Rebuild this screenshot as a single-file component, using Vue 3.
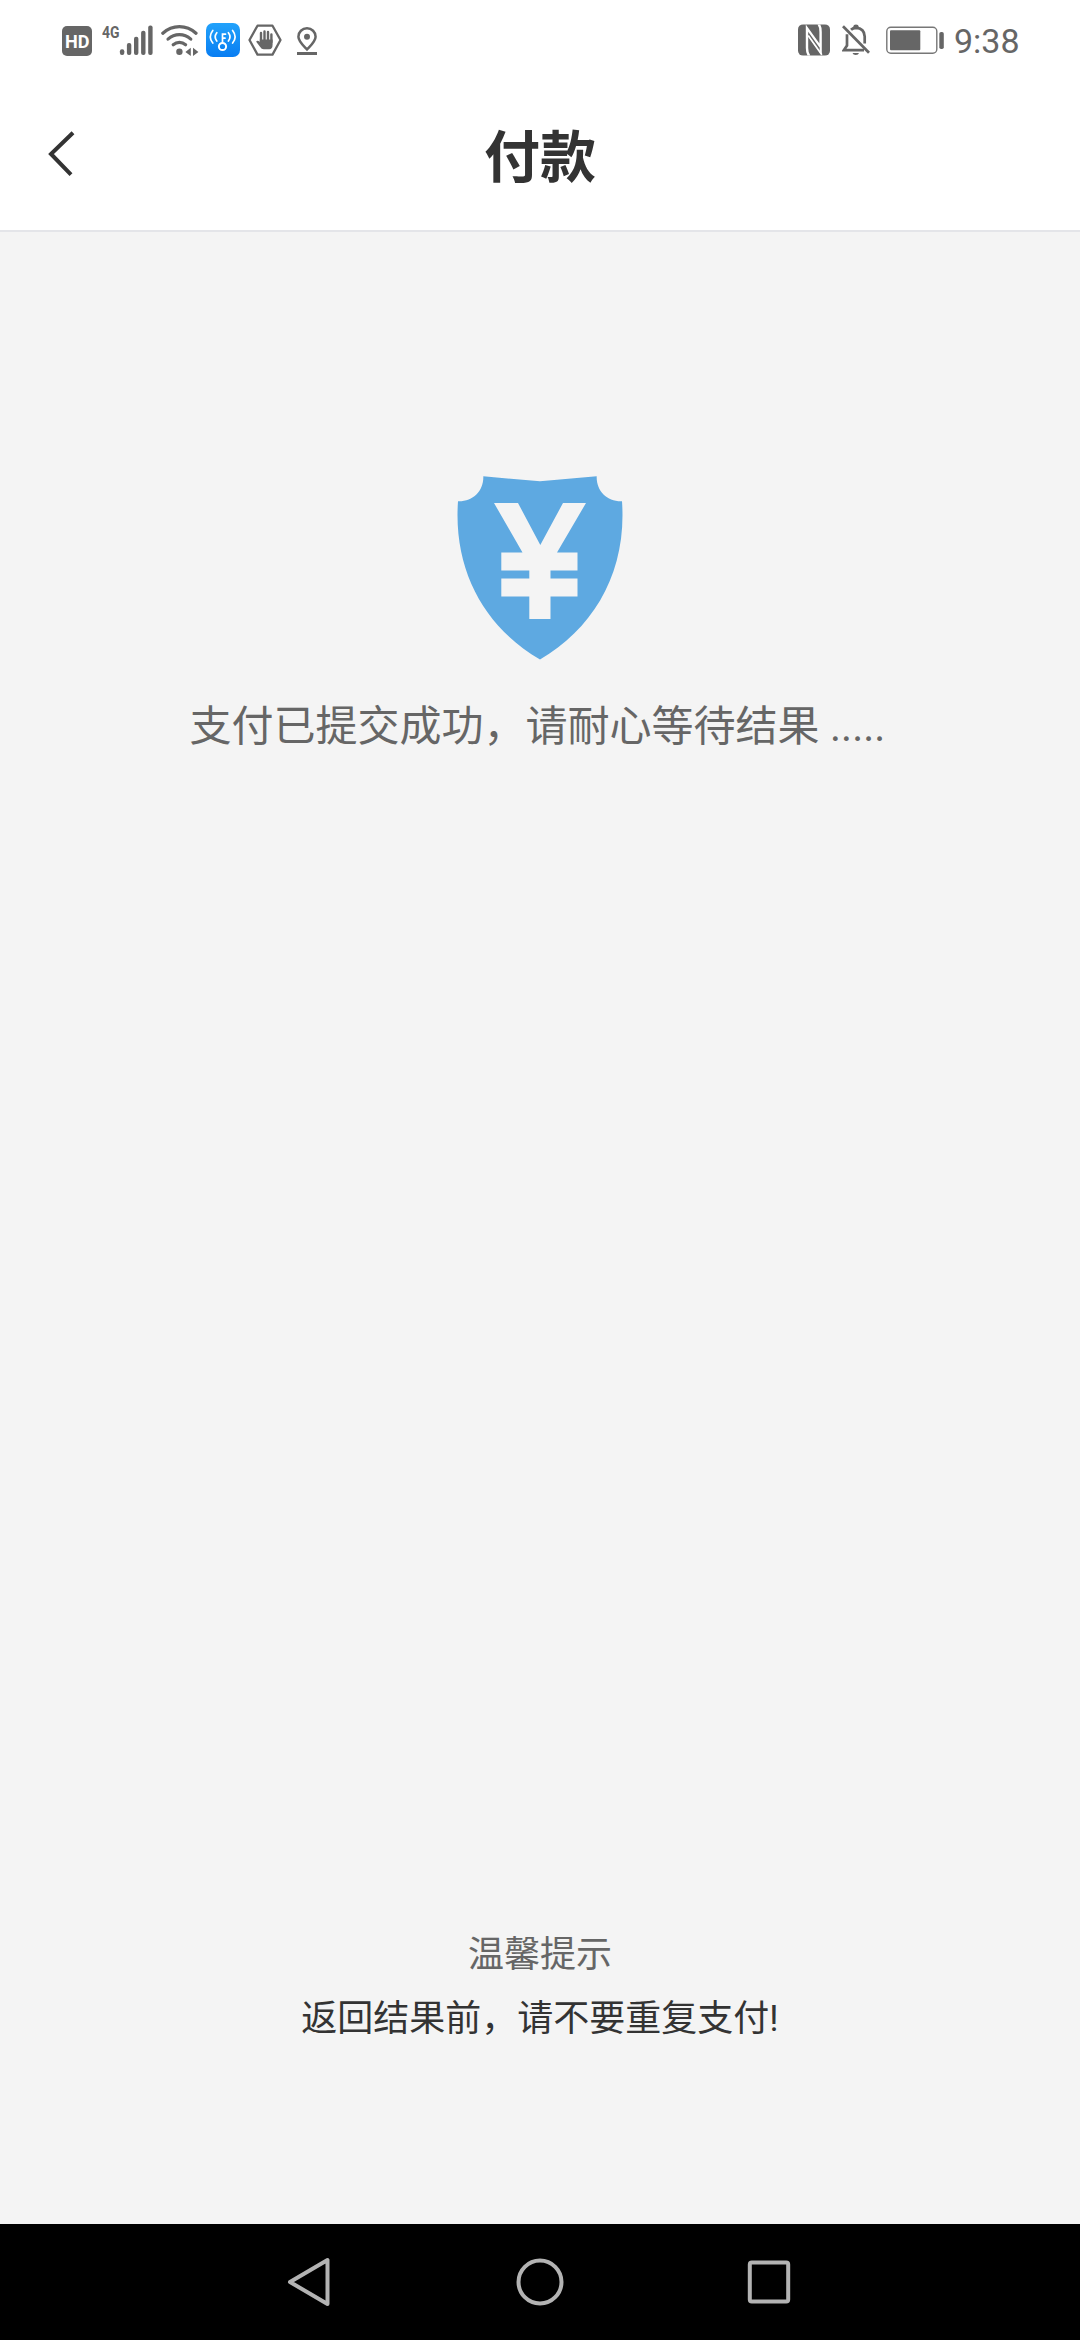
<script setup>
const bars = [
  { x: 2.2, top: 25.6 },
  { x: 9.2, top: 19.3 },
  { x: 16.3, top: 13 },
  { x: 23.4, top: 7 },
  { x: 30.5, top: 1.8 },
]
</script>

<template>
  <div class="screen">
    <div class="status">
      <svg class="hd" width="30" height="34" viewBox="0 0 30 34">
        <rect y="3" width="30" height="30" rx="5" fill="#666" />
        <text x="3" y="25" textLength="24.5" lengthAdjust="spacingAndGlyphs" class="hd-text">HD</text>
      </svg>
      <svg class="cell" width="51" height="34" viewBox="0 0 51 34">
        <text x="0" y="14.6" textLength="17.5" lengthAdjust="spacingAndGlyphs" class="net-text">4G</text>
        <g transform="translate(15.7 .7)">
          <rect v-for="b in bars" :key="b.x" :x="b.x" :y="b.top" width="4.4" :height="31.3 - b.top" rx="2" fill="#666" />
        </g>
      </svg>
      <svg class="wifi" width="38" height="34" viewBox="0 0 38 34">
        <g fill="none" stroke="#666" stroke-width="3.2" stroke-linecap="round">
          <path d="M1.8 10.2Q9 3.6 18.4 3.6T35 10.2" />
          <path d="M7 16.1Q12 11.7 18.4 11.7T29.8 16.1" />
          <path d="M12.2 21.8Q15 19.4 18.4 19.4T24.6 21.8" />
        </g>
        <circle cx="18.4" cy="28.7" r="3.2" fill="#666" />
        <path d="M24.4 29l5.4-4.2v8.3zM37.4 29L32 24.8v8.3z" fill="#666" />
      </svg>
      <svg class="key" width="34" height="34" viewBox="0 0 34 34">
        <defs>
          <linearGradient id="blue" x1="0" y1="0" x2="0" y2="1">
            <stop offset="0" stop-color="#22a2fb" />
            <stop offset="1" stop-color="#087df2" />
          </linearGradient>
        </defs>
        <rect width="34" height="34" rx="7" fill="url(#blue)" />
        <g fill="none" stroke="#fff" stroke-width="1.7" stroke-linecap="round">
          <circle cx="16.5" cy="23.5" r="3.6" stroke-width="2" />
          <path d="M16.5 19.5V11.2h3M16.5 15.2h2.5" />
          <path d="M10.8 9.7Q7.6 13.8 10.8 18M6.8 7.4Q1.8 13.8 6.8 20M22.4 9.7Q25.6 13.8 22.4 18M26.6 7.4Q31.6 13.8 26.6 20" />
        </g>
      </svg>
      <svg class="hand" width="34" height="34" viewBox="0 0 34 34">
        <path d="M9.5 2.7h15L32.5 17l-8 14.6h-15L1.5 17z" fill="none" stroke="#666" stroke-width="2.3" stroke-linejoin="round" />
        <path d="M13 19V10M16.5 17V8.5M20 17V9M23.4 19v-7.5" stroke="#666" stroke-width="2.4" stroke-linecap="round" />
        <path d="M11.8 16.5H24.6V21.5Q24.6 26.2 21.3 26.2H15.7Q13.5 26.2 12.2 24L8.2 18.8Q8.8 17 10.6 18L11.8 19z" fill="#666" />
      </svg>
      <svg class="pin" width="20" height="34" viewBox="0 0 20 34">
        <path d="M10 26.5C6 22.2 1.4 18.2 1.4 13.7A8.6 8.4 0 0 1 18.6 13.7C18.6 18.2 14 22.2 10 26.5z" fill="none" stroke="#666" stroke-width="2.5" />
        <circle cx="10" cy="13.8" r="3" fill="#666" />
        <path d="M0 30.5h20" stroke="#666" stroke-width="3" />
      </svg>

      <svg class="nfc" width="32" height="34" viewBox="0 0 32 34">
        <rect y="1.4" width="32" height="31.2" rx="5" fill="#666" />
        <path d="M7.8 1.4L21.4 20.5V9Q21.4 4 19.5 1.4H22.3Q23.8 4 23.8 9V32.6L10.2 13.5V25Q10.2 30 12.3 32.6H9.5Q7.8 30 7.8 25z" fill="#fff" />
        <path d="M10.2 8.8L21.7 24.8V28.4L10.2 12.4z" fill="#666" />
        <path d="M10.2 12.6L23.8 31.7" stroke="#fff" stroke-width="1.7" />
      </svg>
      <svg class="bell" width="28" height="34" viewBox="0 0 28 34">
        <g fill="none" stroke="#666" stroke-width="2.7">
          <path d="M5 11.2V22.5L1.8 27.2H22M9 6.8Q11 4.9 14 4.9Q22.4 5.3 22.7 13.5V20.5" />
          <path d="M1 3.2L27 29.8" />
        </g>
        <path d="M11.2 5V3.7Q11.4 1.6 14 1.6T16.8 3.7V6zM10.5 30H17Q16.5 32 13.8 32T10.5 30z" fill="#666" />
      </svg>
      <svg class="battery" width="58" height="34" viewBox="0 0 58 34">
        <rect x=".8" y="4.3" width="50" height="26" rx="4" fill="none" stroke="#777" stroke-width="1.4" />
        <rect x="4" y="7.3" width="30.3" height="20" rx="1" fill="#666" />
        <rect x="53.3" y="9" width="4.5" height="17" rx="1.8" fill="#666" />
      </svg>
      <span class="time">9:38</span>
    </div>

    <header class="header">
      <svg class="back" width="32" height="52" viewBox="0 0 32 52">
        <path d="M26 4.8L4 26L24 46.6" fill="none" stroke="#333" stroke-width="4" />
      </svg>
      <h1>付款</h1>
    </header>

    <main class="content">
      <svg class="shield" width="166" height="184" viewBox="0 0 166 184">
        <path d="M26.3 .3L83 5.3L139.7 .3C139.2 15 150 25.8 165 25.3C170 96 137 152 83 183.5C29 152-4 96 1 25.3C16 25.8 26.8 15 26.3 .3z" fill="#5ea9e1" />
        <path d="M37 27H61L83.3 69L106 27H129L100 76.5H120.5V94.5H93.5V102.5H120.5V120.5H93.5V143H72.3V120.5H44.3V102.5H72.3V94.5H44.3V76.5H65.5z" fill="#f4f4f4" />
      </svg>
      <p class="message">支付已提交成功，请耐心等待结果 .....</p>
      <div class="tips">
        <p class="tip-title">温馨提示</p>
        <p class="tip-text">返回结果前，请不要重复支付!</p>
      </div>
    </main>

    <nav class="nav">
      <svg width="48" height="56" viewBox="0 0 48 56">
        <path d="M42.5 6V50L5 28z" fill="none" stroke="#b3b3b3" stroke-width="4" stroke-linejoin="round" />
      </svg>
      <svg width="56" height="56" viewBox="0 0 56 56">
        <circle cx="28" cy="28" r="21.5" fill="none" stroke="#b3b3b3" stroke-width="4" />
      </svg>
      <svg width="48" height="56" viewBox="0 0 48 56">
        <rect x="2.8" y="8.4" width="38.4" height="39.2" rx="2" fill="none" stroke="#b3b3b3" stroke-width="4" />
      </svg>
    </nav>
  </div>
</template>

<style>
body {
  margin: 0;
}
</style>

<style scoped>
.screen {
  display: flex;
  flex-direction: column;
  width: 1080px;
  height: 2340px;
  overflow: hidden;
  background: #f4f4f4;
  font-family: Roboto, "Noto Sans CJK SC", sans-serif;
}
svg {
  display: block;
  flex: none;
}
.status {
  display: flex;
  align-items: center;
  box-sizing: border-box;
  height: 80px;
  padding-left: 62px;
  background: #fff;
}
.hd-text {
  font: 700 19px Roboto, sans-serif;
  fill: #fff;
}
.net-text {
  font: 700 17px Roboto, sans-serif;
  fill: #666;
}
.cell {
  margin-left: 10px;
}
.wifi {
  margin-left: 8px;
}
.key {
  margin-left: 7px;
}
.hand {
  margin-left: 8px;
}
.pin {
  margin-left: 15px;
}
.nfc {
  margin-left: 481px;
}
.bell {
  margin-left: 12px;
}
.battery {
  margin-left: 16px;
}
.time {
  margin: 2px 0 0 10px;
  font-size: 34px;
  line-height: 40px;
  color: #666;
}
.header {
  display: grid;
  grid-template-columns: 140px 1fr 140px;
  align-items: center;
  box-sizing: border-box;
  height: 152px;
  border-bottom: 2px solid #e4e5e9;
  background: #fff;
}
.back {
  margin: 0 0 3px 47px;
}
h1 {
  margin: 6px 0 0;
  font-size: 56px;
  line-height: 80px;
  font-weight: 700;
  text-align: center;
  color: #333;
}
.content {
  display: flex;
  flex: 1;
  flex-direction: column;
  align-items: center;
}
.shield {
  margin-top: 244px;
}
p {
  margin: 0;
  white-space: pre;
}
.message {
  margin: 37px 5px 0 0;
  font-size: 42px;
  line-height: 60px;
  color: #666;
}
.tips {
  margin-top: auto;
  padding-bottom: 173px;
  font-size: 36px;
  line-height: 64px;
  text-align: center;
}
.tip-title {
  color: #666;
}
.tip-text {
  color: #333;
}
.nav {
  display: flex;
  align-items: flex-start;
  justify-content: center;
  gap: 179px;
  box-sizing: border-box;
  height: 116px;
  padding-top: 30px;
  background: #000;
}
</style>
